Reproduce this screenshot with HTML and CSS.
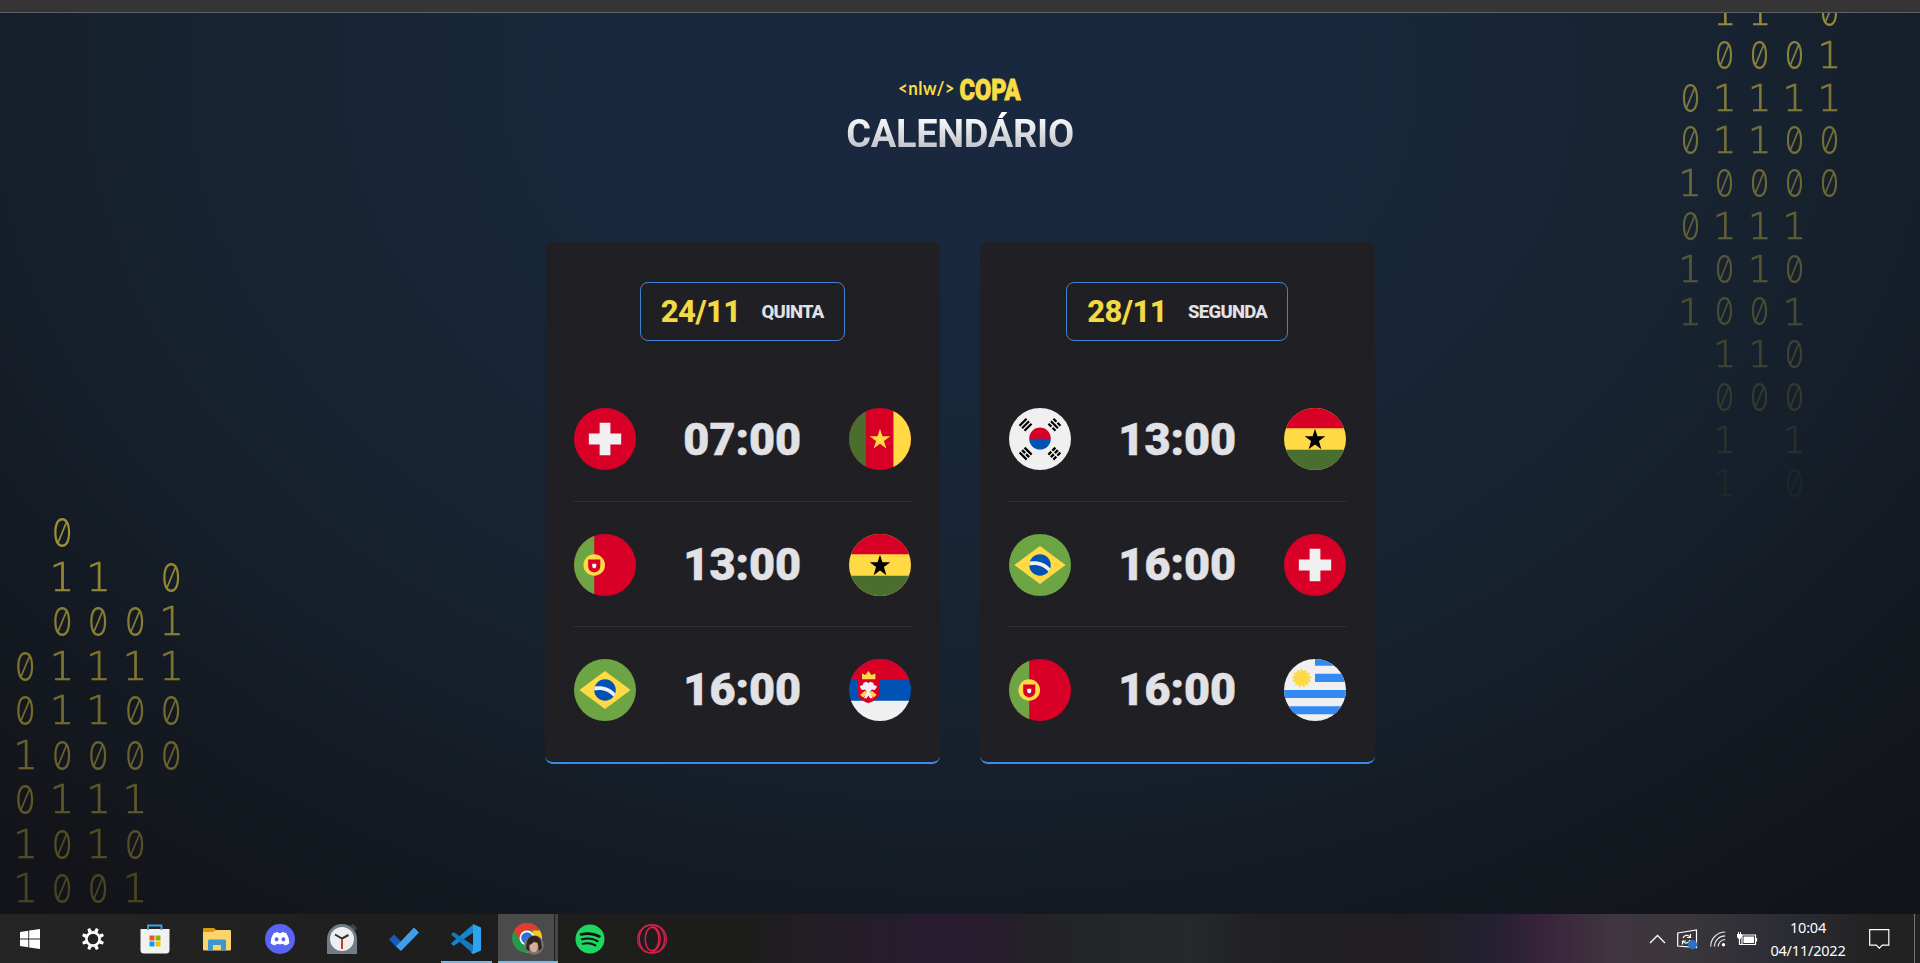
FILE: index.html
```html
<!DOCTYPE html>
<html lang="pt-br">
<head>
<meta charset="utf-8">
<title>NLW Copa - Calendário</title>
<link rel="stylesheet" href="styles.css">
</head>
<body>
<svg class="defs" aria-hidden="true">
  <defs>
    <clipPath id="disc"><circle cx="256" cy="256" r="256"/></clipPath>
    <symbol id="switzerland" viewBox="0 0 512 512"><circle cx="256" cy="256" r="256" fill="#d80027"/><path fill="#f0f0f0" d="M389.6 211.5h-89v-89h-89v89h-89v89h89v89h89v-89h89z"/></symbol>
    <symbol id="cameroon" viewBox="0 0 512 512"><g clip-path="url(#disc)"><path fill="#d80027" d="M0 0h512v512H0z"/><path fill="#496e2d" d="M0 0h140v512H0z"/><path fill="#ffda44" d="M367 0h145v512H367z"/></g><path fill="#ffda44" d="M256 172l20.100 61.800h65l-52.600 38.200 20.100 61.900L256 295.700l-52.600 38.200 20.100-61.900-52.600-38.200h65z"/></symbol>
    <symbol id="portugal" viewBox="0 0 512 512"><g clip-path="url(#disc)"><path fill="#d80027" d="M0 0h512v512H0z"/><path fill="#6da544" d="M0 0h167v512H0z"/></g><circle cx="167" cy="256" r="89" fill="#ffda44"/><path fill="#d80027" d="M117 211.500v55.600a50 50 0 0 0 100 0v-55.600z"/><path fill="#f0f0f0" d="M167 284c-9.200 0-16.700-7.500-16.700-16.700V245h33.400v22.300c0 9.200-7.500 16.700-16.700 16.700z"/></symbol>
    <symbol id="ghana" viewBox="0 0 512 512"><g clip-path="url(#disc)"><path fill="#ffda44" d="M0 0h512v512H0z"/><path fill="#d80027" d="M0 0h512v167H0z"/><path fill="#496e2d" d="M0 345h512v167H0z"/></g><path d="M256 172l20.100 61.800h65l-52.600 38.200 20.100 67.900L256 301.700l-52.600 38.200 20.100-67.900-52.600-38.200h65z"/></symbol>
    <symbol id="brazil" viewBox="0 0 512 512"><circle cx="256" cy="256" r="256" fill="#6da544"/><path fill="#ffda44" d="M256 100l211.500 156L256 412 44.500 256z"/><circle cx="256" cy="256" r="89" fill="#0052b4"/><path fill="#f0f0f0" d="M171 228c63-12 127 9 170 56-3 10-7 20-14 28-38-46-98-66-160-52 0-12 1-22 4-32z"/></symbol>
    <symbol id="serbia" viewBox="0 0 512 512"><g clip-path="url(#disc)"><path fill="#0052b4" d="M0 0h512v512H0z"/><path fill="#d80027" d="M0 0h512v167H0z"/><path fill="#f0f0f0" d="M0 345h512v167H0z"/></g><path fill="#d80027" d="M66 166v105c0 70 94 94 94 94s94-24 94-94V166z"/><path fill="#ffda44" d="M108 167v-48l26 14 26-33 26 33 32-14v48zM92 296l40-34 20 26-36 30zM228 296l-40-34-20 26 36 30z"/><path fill="#f0f0f0" d="M160 200l14-12 26 8 6 18 26 10-18 32-26-4-12 16 4 24 18 32h-24l-14-22-14 22h-24l18-32 4-24-12-16-26 4-18-32 26-10 6-18 26-8z"/></symbol>
    <g id="trigram"><path d="M-38-36h76v17h-76zM-38-9h76V8h-76zM-38 18h76v17h-76z"/></g>
    <symbol id="korea" viewBox="0 0 512 512"><circle cx="256" cy="256" r="256" fill="#f0f0f0"/><path fill="#d80027" d="M167 250a89 89 0 0 1 178 0c0 20-40 24-89 10-49 14-89 10-89-10z"/><path fill="#0052b4" d="M167 254h178a89 89 0 0 1-178 0z"/><use href="#trigram" transform="translate(137 139) rotate(-45) scale(1.080)"/><use href="#trigram" transform="translate(375 139) rotate(45) scale(1.080)"/><use href="#trigram" transform="translate(137 377) rotate(45) scale(1.080)"/><use href="#trigram" transform="translate(375 377) rotate(-45) scale(1.080)"/><g stroke="#f0f0f0" stroke-width="13"><path d="M345 169l19-19M386 128l21-21M130 384l14-14M345 347l62 62"/></g></symbol>
    <symbol id="uruguay" viewBox="0 0 512 512"><g clip-path="url(#disc)"><path fill="#f0f0f0" d="M0 0h512v512H0z"/><path fill="#338af3" d="M256 0h256v55H256zM256 122h256v67H256zM0 256h512v67H0zM0 390h512v66H0z"/></g><path fill="#ffda44" d="M146 77l14 25 24-16 2 29 29-4-11 27 27 11-24 17 19 22-29 4 6 28-27-11-10 28-20-22-20 22-10-28-27 11 6-28-29-4 19-22-24-17 27-11-11-27 29 4 2-29 24 16z"/></symbol>
  </defs>
</svg>

<div class="browser-edge"></div>

<main class="stage">
  <div class="binary binary-left" data-rows=" 0   | 11 0| 0001|01111|01100|10000|0111 |1010 |1001 " data-from="0.6" data-to="0.24"></div>
  <div class="binary binary-right" data-rows=" 11 0| 0001|01111|01100|10000|0111 |1010 |1001 | 110 | 000 | 1 1 | 1 0 " data-from="0.56" data-to="0.04"></div>

  <header class="header">
    <svg class="logo" viewBox="0 0 124 26" width="124" height="26">
      <text class="logo-nlw" x="0" y="20.500" textLength="57" lengthAdjust="spacingAndGlyphs">&lt;nlw/&gt;</text>
      <text class="logo-copa" x="61.500" y="26" textLength="61" lengthAdjust="spacingAndGlyphs">COPA</text>
    </svg>
    <h1 class="title">CALENDÁRIO</h1>
  </header>

  <div class="cards">
    <section class="card">
      <h2 class="date">24/11 <span class="weekday">QUINTA</span></h2>
      <ul class="games">
        <li class="game"><svg class="flag"><use href="#switzerland"/></svg><strong class="time">07:00</strong><svg class="flag"><use href="#cameroon"/></svg></li>
        <li class="game"><svg class="flag"><use href="#portugal"/></svg><strong class="time">13:00</strong><svg class="flag"><use href="#ghana"/></svg></li>
        <li class="game"><svg class="flag"><use href="#brazil"/></svg><strong class="time">16:00</strong><svg class="flag"><use href="#serbia"/></svg></li>
      </ul>
    </section>
    <section class="card">
      <h2 class="date">28/11 <span class="weekday">SEGUNDA</span></h2>
      <ul class="games">
        <li class="game"><svg class="flag"><use href="#korea"/></svg><strong class="time">13:00</strong><svg class="flag"><use href="#ghana"/></svg></li>
        <li class="game"><svg class="flag"><use href="#brazil"/></svg><strong class="time">16:00</strong><svg class="flag"><use href="#switzerland"/></svg></li>
        <li class="game"><svg class="flag"><use href="#portugal"/></svg><strong class="time">16:00</strong><svg class="flag"><use href="#uruguay"/></svg></li>
      </ul>
    </section>
  </div>
</main>

<footer class="taskbar">
  <div class="apps">
    <div class="app app-start"><svg width="20" height="20" viewBox="0 0 20 20"><path fill="#fff" d="M0 3l8.300-1.200V9.600H0zM9.200 1.600L20 0v9.600H9.200zM0 10.400h8.300v7.900L0 17.100zM9.200 10.400H20V20L9.200 18.400z"/></svg></div>
    <div class="app"><svg width="24" height="24" viewBox="-12 -12 24 24"><circle r="6.600" fill="none" stroke="#fff" stroke-width="2.600"/><g fill="#fff"><path id="tooth" d="M-1.900-7.500l.5-3.700h2.800l.5 3.700z" transform="rotate(22.500)"/><use href="#tooth" transform="rotate(45)"/><use href="#tooth" transform="rotate(90)"/><use href="#tooth" transform="rotate(135)"/><use href="#tooth" transform="rotate(180)"/><use href="#tooth" transform="rotate(225)"/><use href="#tooth" transform="rotate(270)"/><use href="#tooth" transform="rotate(315)"/></g></svg></div>
    <div class="app"><svg width="30" height="32" viewBox="0 0 30 32"><path fill="#f1f1f1" d="M.5 6h29v21a3.500 3.500 0 0 1-3.500 3.500H4A3.500 3.500 0 0 1 .5 27z"/><path d="M8 7V2.500h13.500V7" fill="none" stroke="#35a8dc" stroke-width="1.800"/><path fill="#f25022" d="M9.500 12.500h5v5h-5z"/><path fill="#7fba00" d="M15.500 12.500h5v5h-5z"/><path fill="#00a4ef" d="M9.500 18.500h5v5h-5z"/><path fill="#ffb900" d="M15.500 18.500h5v5h-5z"/></svg></div>
    <div class="app"><svg width="28" height="24" viewBox="0 0 28 24"><path fill="#d99a12" d="M0 2a1 1 0 0 1 1-1h10l2.500 2.500L11 6H0z"/><path fill="#fbd46a" d="M0 5h10l3-2h14a1 1 0 0 1 1 1v18.500a1 1 0 0 1-1 1H1a1 1 0 0 1-1-1z"/><path fill="#3d97cf" d="M5 23.500V14a1.500 1.500 0 0 1 1.500-1.500h15A1.500 1.500 0 0 1 23 14v9.500h-5V18h-8v5.500z"/></svg></div>
    <div class="app"><svg width="30" height="30" viewBox="0 0 30 30"><circle cx="15" cy="15" r="15" fill="#5865f2"/><path fill="#fff" d="M8.500 9.500q2.200-1.500 4.500-1.600l.6 1.200h2.800l.6-1.200q2.300.1 4.500 1.600 3 4.600 2.900 9.700-2 1.800-4.800 2.300l-1.100-1.800q-3.500 1-7 0l-1.100 1.800q-2.800-.5-4.800-2.300Q5.500 14 8.500 9.500z"/><ellipse cx="11.600" cy="15.300" rx="1.900" ry="2.100" fill="#5865f2"/><ellipse cx="18.400" cy="15.300" rx="1.900" ry="2.100" fill="#5865f2"/></svg></div>
    <div class="app"><svg width="30" height="30" viewBox="0 0 30 30"><path fill="#3d454d" d="M23 2l3-2 4 4-2 3z"/><path fill="#717c86" d="M0 30V15a15 15 0 0 1 30 0v15z"/><circle cx="15" cy="15" r="12" fill="#eceeef"/><path d="M8 10.500l7 4 6.500-3.500" fill="none" stroke="#333" stroke-width="2"/><path stroke="#c43e1c" stroke-width="2" d="M15 15v10"/></svg></div>
    <div class="app"><svg width="30" height="26" viewBox="0 0 30 26"><path fill="#195abd" d="M0 13.500l5-5 7.500 7.500-5 5z"/><path fill="#439ee8" d="M7 20.500L25 1.500 30 6.500 12 25z"/></svg></div>
    <div class="app app-open"><svg width="30" height="30" viewBox="0 0 30 30"><path fill="#1587cf" d="M0 19.500l22-19v8.300L2.500 22z"/><path fill="#1379bd" d="M0 10.500L22 29.500v-8.300L2.500 8z"/><path fill="#2ba5ef" d="M22 0l8 3.500v23L22 30l-2-1.500 2-1.500z"/></svg></div>
    <div class="app app-active"><svg width="32" height="32" viewBox="0 0 32 32"><circle cx="15" cy="15" r="15" fill="#26984a"/><path fill="#e33b2e" d="M2 7.500a15 15 0 0 1 26 0H15l-6.500 11z"/><path fill="#fdc716" d="M28 7.500A15 15 0 0 1 15 30l6.500-11-1-11.500z"/><circle cx="15" cy="15" r="7.500" fill="#fff"/><circle cx="15" cy="15" r="5.800" fill="#2a6fe0"/><circle cx="22" cy="22" r="9.800" fill="#7b7168"/><path fill="#30241f" d="M14 26c1-5 0-13 8-13s7 8 8 12l-3 3c-1-4 0-7-2-9-3 2-5 2-7 1-2 4 0 5-1 8z"/><ellipse cx="21.800" cy="23.500" rx="4" ry="6" fill="#d9ab98"/><path fill="#30241f" d="M17 20q4-6 9 0l-4-1-4 3z"/></svg></div>
    <div class="app"><svg width="30" height="30" viewBox="0 0 30 30"><circle cx="15" cy="15" r="14.500" fill="#1ed760"/><g fill="none" stroke="#111" stroke-linecap="round"><path stroke-width="2.600" d="M6 10.500q10-2.500 18.500 2"/><path stroke-width="2.200" d="M7 15.300q8.500-2.200 15.500 1.800"/><path stroke-width="1.900" d="M7.500 19.800q7-1.800 13 1.600"/></g></svg></div>
    <div class="app"><svg width="30" height="30" viewBox="0 0 30 30"><g fill="none" stroke="#dc1f4b"><circle cx="15" cy="15" r="14.300" stroke-width="1.400"/><ellipse cx="12.800" cy="15" rx="10.500" ry="13.500" stroke-width="1.200"/><ellipse cx="15" cy="15" rx="6.800" ry="11.800" stroke-width="1.500"/><path d="M17 1.500a10.500 13.500 0 0 1 0 27" stroke-width="1.200"/></g></svg></div>
  </div>
  <div class="tray">
    <svg width="17" height="10" viewBox="0 0 17 10"><path d="M1 9l7.500-7.500L16 9" fill="none" stroke="#fff" stroke-width="1.300"/></svg>
    <svg class="tray-sync" width="21" height="20" viewBox="0 0 21 20"><path d="M.7 4l18.800-3v17.500L.7 17z" fill="none" stroke="#fff" stroke-width="1.200"/><path d="M6 9a4 4 0 0 1 7-1M13.500 5v3.500H10M13 11a4 4 0 0 1-7 1.500M5.500 15.500V12H9" fill="none" stroke="#fff" stroke-width="1.200"/><circle cx="15.500" cy="15.500" r="4.600" fill="#2b74c2"/></svg>
    <svg class="tray-wifi" width="16" height="16" viewBox="0 0 16 16"><g fill="none" stroke="#e4e4e4" stroke-width="1.200"><path d="M.7 15.500A14.500 14.500 0 0 1 15.200 1"/><path d="M4.500 15.500A10.700 10.700 0 0 1 15.200 4.800"/><path d="M8.200 15.500a7 7 0 0 1 7-7"/></g><circle cx="13.500" cy="13.800" r="1.700" fill="#fff"/></svg>
    <svg class="tray-battery" width="21" height="14" viewBox="0 0 21 14"><path d="M5 3h13.500v9.500H5zM19.500 6v3.500M2.500 7v5.500H5" fill="none" stroke="#fff" stroke-width="1.200"/><path fill="#fff" d="M6.500 4.500H17V11H6.500zM0 2h5v3L3.500 7h-2L0 5zM1 0h1v2H1zM3 0h1v2H3z"/></svg>
    <div class="clock"><span class="clock-time">10:04</span><span class="clock-date">04/11/2022</span></div>
    <svg class="tray-note" width="21" height="20" viewBox="0 0 21 20"><path d="M.7.700h19.100v15.500h-6.500l-3 3-3-3H.7z" fill="none" stroke="#fff" stroke-width="1.200"/></svg>
    <div class="show-desktop"></div>
  </div>
</footer>
<script src="app.js"></script>
</body>
</html>
```
FILE: styles.css
```css
* { box-sizing: border-box; margin: 0; padding: 0; }

body {
  width: 1920px;
  height: 963px;
  display: flex;
  flex-direction: column;
  overflow: hidden;
  background: #121214;
  color: #e1e1e6;
  font-family: Roboto, sans-serif;
}

.defs { position: absolute; width: 0; height: 0; }

.browser-edge {
  height: 13px;
  flex: none;
  background: #353535;
  border-bottom: 1px solid #606264;
}

.stage {
  position: relative;
  height: 901px;
  flex: none;
  overflow: hidden;
  display: flex;
  flex-direction: column;
  align-items: center;
  background: radial-gradient(ellipse 1400px 1050px at 960px 60px, #18283f 0%, #18273b 28%, #17222f 60%, #141a23 80%, #131419 100%);
}

/* falling binary digits */
.binary { position: absolute; display: grid; color: #f7dd43; }
.binary-left { left: 7.200px; top: 498.200px; grid-template-columns: repeat(5, 36.500px); grid-auto-rows: 44.500px; font-size: 38.500px; }
.binary-right { left: 1672.500px; top: -21.100px; grid-template-columns: repeat(5, 34.850px); grid-auto-rows: 42.800px; font-size: 36.700px; }
.digit { display: flex; align-items: center; justify-content: center; line-height: 1; }
.zero { font-family: Inter, sans-serif; font-weight: 300; font-feature-settings: "zero"; transform: scale(0.840, 1.020); }
.one { font-family: "DejaVu Sans", sans-serif; font-weight: 200; -webkit-text-stroke: 0.700px #f7dd43; }

.header { margin-top: 61px; display: flex; flex-direction: column; align-items: center; }
.logo { display: block; overflow: visible; }
.logo-nlw { font-family: Lato, sans-serif; font-weight: 700; font-size: 19px; letter-spacing: 0.500px; fill: #f7dd43; }
.logo-copa { font-family: Roboto, sans-serif; font-weight: 900; font-size: 30px; fill: #f7dd43; stroke: #f7dd43; stroke-width: 0.900px; stroke-linejoin: miter; }
.title {
  margin-top: 10px;
  font-size: 38px;
  line-height: 48px;
  font-weight: 700;
  letter-spacing: -0.300px;
  background: linear-gradient(180deg, #fff 10%, #b9bcc4 88%);
  -webkit-background-clip: text;
  background-clip: text;
  color: transparent;
}

.cards { margin-top: 84px; display: flex; gap: 40px; }
.card {
  width: 395px;
  height: 522px;
  padding: 40px 29px 0 28.500px;
  display: flex;
  flex-direction: column;
  align-items: center;
  background: #202024;
  border-bottom: 2px solid #3b8aee;
  border-radius: 8px;
}
.date {
  height: 59px;
  padding: 0 20px;
  display: flex;
  align-items: center;
  gap: 21px;
  border: 1px solid #3f83d2;
  border-radius: 8px;
  color: #f3da42;
  font-size: 31px;
  font-weight: 800;
  letter-spacing: -0.600px;
}
.weekday { color: #e1e1e6; font-size: 18.500px; letter-spacing: -0.700px; }
.games { width: 100%; margin-top: 35px; list-style: none; }
.game { height: 125px; padding-top: 1px; display: flex; align-items: center; justify-content: space-between; }
.game + .game { border-top: 1px solid #323238; }
.flag { width: 62px; height: 62px; display: block; }
.time { font-size: 45px; font-weight: 900; -webkit-text-stroke: 0.500px #e1e1e6; }

.taskbar {
  height: 49px;
  flex: none;
  display: flex;
  justify-content: space-between;
  background: linear-gradient(90deg, #252525 0, #1e1e1e 400px, #1d1d1b 740px, #231e26 820px, #271c2e 930px, #271d2c 1000px, #232325 1040px, #25292b 1190px, #212022 1260px, #201e21 1400px, #232030 1490px, #38233a 1540px, #403540 1610px, #3b373b 1680px, #2c2c35 1780px, #222222 1880px);
}
.apps { display: flex; gap: 2.150px; }
.app { width: 60px; display: flex; align-items: center; justify-content: center; }
.app-start { margin-right: 1px; }
.app-open { background: linear-gradient(#76b9ed, #76b9ed) 5px 100% / 51px 2px no-repeat; }
.app-active {
  background:
    linear-gradient(#76b9ed, #76b9ed) 0 100% / 61px 2px no-repeat,
    linear-gradient(90deg, #4b4b4b 56px, #202020 56px, #202020 57px, #454545 57px);
}
.tray { display: flex; align-items: center; color: #fff; }
.tray-sync { margin-left: 11px; }
.tray-wifi { margin-left: 12px; }
.tray-battery { margin-left: 11px; }
.clock { width: 98px; margin-left: 1px; display: flex; flex-direction: column; align-items: center; font: 14.500px/23px "Noto Sans", sans-serif; letter-spacing: -0.200px; }
.tray-note { margin-left: 12px; }
.show-desktop { width: 6px; height: 49px; margin-left: 24px; border-left: 1px solid #777; }
```
FILE: app.js
```js
document.querySelectorAll('.binary').forEach((box) => {
  const rows = box.dataset.rows.split('|');
  const from = Number(box.dataset.from);
  const to = Number(box.dataset.to);
  rows.forEach((row, y) => {
    // four-character rows have their last gap one column wider
    const cells = row.length === 4 ? row.replace(/ (\d)$/, '  $1') : row;
    const opacity = from + (to - from) * y / (rows.length - 1);
    [...cells].forEach((char, x) => {
      if (char === ' ') return;
      const digit = document.createElement('span');
      digit.className = 'digit ' + (char === '0' ? 'zero' : 'one');
      digit.textContent = char;
      digit.style.gridArea = `${y + 1} / ${x + 1}`;
      digit.style.opacity = opacity;
      box.append(digit);
    });
  });
});
```
